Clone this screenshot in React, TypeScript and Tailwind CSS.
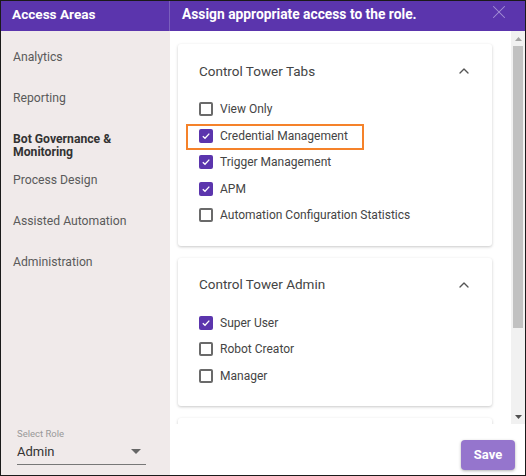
import { ChevronUp, X } from "lucide-react";

const sidebarItems = [
  { label: "Analytics" },
  { label: "Reporting" },
  { label: "Bot Governance & Monitoring", active: true },
  { label: "Process Design" },
  { label: "Assisted Automation" },
  { label: "Administration" },
];

const sections = [
  {
    title: "Control Tower Tabs",
    options: [
      { label: "View Only", checked: false },
      { label: "Credential Management", checked: true, highlight: true },
      { label: "Trigger Management", checked: true },
      { label: "APM", checked: true },
      { label: "Automation Configuration Statistics", checked: false },
    ],
  },
  {
    title: "Control Tower Admin",
    options: [
      { label: "Super User", checked: true },
      { label: "Robot Creator", checked: false },
      { label: "Manager", checked: false },
    ],
  },
];

function Checkbox({ checked }: { checked: boolean }) {
  if (checked) {
    return (
      <span className="w-[14px] h-[14px] rounded-[2px] bg-[#5b35ad] flex items-center justify-center shrink-0">
        <svg width="10" height="10" viewBox="0 0 10 10">
          <path d="M1.8 5.2 L4 7.3 L8.3 2.6" fill="none" stroke="white" strokeWidth="1.3" />
        </svg>
      </span>
    );
  }
  return <span className="w-[14px] h-[14px] rounded-[2px] border-2 border-[#6a6a6a] shrink-0" />;
}

function Section({ title, options }: (typeof sections)[number]) {
  return (
    <div className="bg-white rounded-[3px] shadow-[0_1px_3px_rgba(0,0,0,0.22)] pl-[21px] pr-[20px] pt-[17px] pb-[17px]">
      <div className="flex items-center justify-between h-[20px]">
        <span className="text-[13.5px] text-[#444]">{title}</span>
        <ChevronUp className="w-[16px] h-[16px] text-[#555]" strokeWidth={2} />
      </div>
      <div className="mt-[15px] flex flex-col">
        {options.map((o) => (
          <div key={o.label} className="relative flex items-center gap-[7px] h-[26.5px]">
            {o.highlight && (
              <div className="absolute left-[-13px] top-[1px] w-[178px] h-[26px] border-2 border-[#f5822a]" />
            )}
            <Checkbox checked={o.checked} />
            <span className="text-[12px] text-[#444]">{o.label}</span>
          </div>
        ))}
      </div>
    </div>
  );
}

export default function App() {
  return (
    <div
      className="w-[526px] h-[476px] border border-[#1a1a1a] flex flex-col overflow-hidden bg-white"
      style={{ fontFamily: "Roboto, 'Liberation Sans', sans-serif" }}
    >
      {/* header */}
      <div className="flex h-[30px] bg-[#5b35ad] text-white shrink-0">
        <div className="w-[169px] border-r border-[#7a5fbd] pl-[11px] pt-[3px] text-[13.6px] font-bold">
          Access Areas
        </div>
        <div className="flex-1 flex justify-between pl-[12px] pr-[15px] pt-[3px]">
          <span className="text-[13.8px] font-bold">Assign appropriate access to the role.</span>
          <X className="w-[22px] h-[22px] -mt-[3px] text-[#a591d6]" strokeWidth={1.1} />
        </div>
      </div>

      <div className="flex flex-1 min-h-0">
        {/* sidebar */}
        <div className="w-[169px] bg-[#f0eaea] flex flex-col justify-between">
          <div className="pt-[19px] pl-[12px]">
            {sidebarItems.map((item) => (
              <div key={item.label} className="h-[41px]">
                <div
                  className={
                    item.active
                      ? "text-[12.2px] leading-[13px] font-bold text-[#333] w-[120px] pt-[1px]"
                      : "text-[12.2px] leading-[15px] text-[#5a5a5a]"
                  }
                >
                  {item.label}
                </div>
              </div>
            ))}
          </div>
          <div className="pl-[16px] pb-[10px]">
            <div className="text-[9.5px] text-[#999]">Select Role</div>
            <div className="w-[129px] flex items-center justify-between border-b border-[#777] pb-[3px] pr-[5px]">
              <span className="text-[13px] text-[#333]">Admin</span>
              <svg width="10" height="5" viewBox="0 0 10 5">
                <path d="M0 0 L10 0 L5 5 Z" fill="#666" />
              </svg>
            </div>
          </div>
        </div>

        {/* content */}
        <div className="flex-1 flex flex-col">
          <div className="h-[393px] flex">
            <div className="flex-1 overflow-hidden pl-[8px] pr-[19px] pt-[13px] flex flex-col gap-[12px]">
              {sections.map((s) => (
                <Section key={s.title} {...s} />
              ))}
              <div className="bg-white rounded-[3px] shadow-[0_1px_3px_rgba(0,0,0,0.22)] h-[60px] shrink-0" />
            </div>
            {/* scrollbar */}
            <div className="w-[14px] bg-[#f1f1f1] flex flex-col items-center">
              <svg width="7" height="4" viewBox="0 0 7 4" className="mt-[6px]">
                <path d="M0 4 L7 4 L3.5 0 Z" fill="#a3a3a3" />
              </svg>
              <div className="w-[10px] h-[282px] bg-[#c1c1c1] mt-[5px]" />
              <div className="flex-1" />
              <svg width="7" height="4" viewBox="0 0 7 4" className="mb-[5px]">
                <path d="M0 0 L7 0 L3.5 4 Z" fill="#505050" />
              </svg>
            </div>
          </div>
          <div className="flex-1 flex justify-end items-start pr-[10px] pt-[16px]">
            <button className="w-[54px] h-[30px] rounded-[4px] bg-[#9575cd] text-white text-[13px] font-bold shadow-[0_1px_3px_rgba(0,0,0,0.3)]">
              Save
            </button>
          </div>
        </div>
      </div>
    </div>
  );
}
